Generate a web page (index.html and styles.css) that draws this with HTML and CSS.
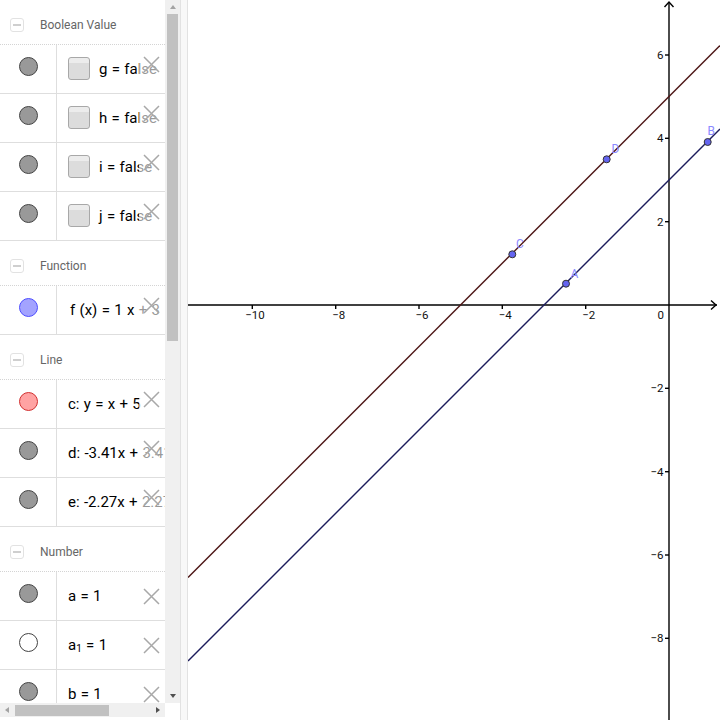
FILE: index.html
```html
<!DOCTYPE html>
<html>
<head>
<meta charset="utf-8">
<link rel="stylesheet" href="styles.css">
</head>
<body>
<div class="app">
  <div class="algebra">
    <div class="av-top">
      <div class="av-list">
        <div class="group"><span class="toggle"></span><span class="group-title">Boolean Value</span></div>
        <div class="item">
          <div class="marble-cell"><span class="marble gray"></span></div>
          <div class="content"><span class="checkbox"></span><span class="formula">g = false</span></div>
          <span class="delete up"><svg width="17" height="17" viewBox="0 0 17 17"><path d="M1 1L16 16M16 1L1 16"/></svg></span>
        </div>
        <div class="item">
          <div class="marble-cell"><span class="marble gray"></span></div>
          <div class="content"><span class="checkbox"></span><span class="formula">h = false</span></div>
          <span class="delete up"><svg width="17" height="17" viewBox="0 0 17 17"><path d="M1 1L16 16M16 1L1 16"/></svg></span>
        </div>
        <div class="item">
          <div class="marble-cell"><span class="marble gray"></span></div>
          <div class="content"><span class="checkbox"></span><span class="formula">i = false</span></div>
          <span class="delete up"><svg width="17" height="17" viewBox="0 0 17 17"><path d="M1 1L16 16M16 1L1 16"/></svg></span>
        </div>
        <div class="item">
          <div class="marble-cell"><span class="marble gray"></span></div>
          <div class="content"><span class="checkbox"></span><span class="formula">j = false</span></div>
          <span class="delete up"><svg width="17" height="17" viewBox="0 0 17 17"><path d="M1 1L16 16M16 1L1 16"/></svg></span>
        </div>
        <div class="group"><span class="toggle"></span><span class="group-title">Function</span></div>
        <div class="item">
          <div class="marble-cell"><span class="marble blue"></span></div>
          <div class="content fx"><span class="formula">f (x) = 1 x + 3</span></div>
          <span class="delete up"><svg width="17" height="17" viewBox="0 0 17 17"><path d="M1 1L16 16M16 1L1 16"/></svg></span>
        </div>
        <div class="group"><span class="toggle"></span><span class="group-title">Line</span></div>
        <div class="item">
          <div class="marble-cell"><span class="marble red"></span></div>
          <div class="content"><span class="formula">c: y = x + 5</span></div>
          <span class="delete up"><svg width="17" height="17" viewBox="0 0 17 17"><path d="M1 1L16 16M16 1L1 16"/></svg></span>
        </div>
        <div class="item">
          <div class="marble-cell"><span class="marble gray"></span></div>
          <div class="content"><span class="formula">d: -3.41x + 3.41y = 17.05</span></div>
          <span class="delete up"><svg width="17" height="17" viewBox="0 0 17 17"><path d="M1 1L16 16M16 1L1 16"/></svg></span>
        </div>
        <div class="item">
          <div class="marble-cell"><span class="marble gray"></span></div>
          <div class="content"><span class="formula">e: -2.27x + 2.27y = 6.82</span></div>
          <span class="delete up"><svg width="17" height="17" viewBox="0 0 17 17"><path d="M1 1L16 16M16 1L1 16"/></svg></span>
        </div>
        <div class="group"><span class="toggle"></span><span class="group-title">Number</span></div>
        <div class="item">
          <div class="marble-cell"><span class="marble gray"></span></div>
          <div class="content"><span class="formula">a = 1</span></div>
          <span class="delete"><svg width="17" height="17" viewBox="0 0 17 17"><path d="M1 1L16 16M16 1L1 16"/></svg></span>
        </div>
        <div class="item">
          <div class="marble-cell"><span class="marble white"></span></div>
          <div class="content"><span class="formula">a<sub>1</sub> = 1</span></div>
          <span class="delete"><svg width="17" height="17" viewBox="0 0 17 17"><path d="M1 1L16 16M16 1L1 16"/></svg></span>
        </div>
        <div class="item">
          <div class="marble-cell"><span class="marble gray"></span></div>
          <div class="content"><span class="formula">b = 1</span></div>
          <span class="delete"><svg width="17" height="17" viewBox="0 0 17 17"><path d="M1 1L16 16M16 1L1 16"/></svg></span>
        </div>
      </div>
      <div class="vscroll">
        <div class="sbtn"><span class="tri-up"></span></div>
        <div class="vthumb"></div>
        <div class="sspace"></div>
        <div class="sbtn"><span class="tri-down"></span></div>
      </div>
    </div>
    <div class="hscroll">
      <div class="hbtn"><span class="tri-left"></span></div>
      <div class="hthumb"></div>
      <div class="sspace"></div>
      <div class="hbtn"><span class="tri-right"></span></div>
    </div>
  </div>
  <div class="splitter"></div>
  <div class="graphics">
    <svg class="plot" width="532" height="720" viewBox="0 0 532 720">
      <g class="axes">
        <line x1="0" y1="305" x2="529" y2="305"/>
        <polyline points="523,300.5 528,305 523,309.5"/>
        <line x1="481" y1="2" x2="481" y2="720"/>
        <polyline points="476.5,7 481,2 485.5,7"/>
        <line x1="64.3" y1="305" x2="64.3" y2="309"/>
        <line x1="147.7" y1="305" x2="147.7" y2="309"/>
        <line x1="231" y1="305" x2="231" y2="309"/>
        <line x1="314.3" y1="305" x2="314.3" y2="309"/>
        <line x1="397.7" y1="305" x2="397.7" y2="309"/>
        <line x1="477" y1="55" x2="481" y2="55"/>
        <line x1="477" y1="138.3" x2="481" y2="138.3"/>
        <line x1="477" y1="221.7" x2="481" y2="221.7"/>
        <line x1="477" y1="388.3" x2="481" y2="388.3"/>
        <line x1="477" y1="471.7" x2="481" y2="471.7"/>
        <line x1="477" y1="555" x2="481" y2="555"/>
        <line x1="477" y1="638.3" x2="481" y2="638.3"/>
      </g>
      <g class="xlab">
        <text x="67" y="319">−10</text>
        <text x="150.7" y="319">−8</text>
        <text x="234" y="319">−6</text>
        <text x="317.3" y="319">−4</text>
        <text x="400.7" y="319">−2</text>
      </g>
      <g class="ylab">
        <text x="476" y="319">0</text>
        <text x="475.5" y="59">6</text>
        <text x="475.5" y="142.3">4</text>
        <text x="475.5" y="225.7">2</text>
        <text x="475.5" y="392.3">−2</text>
        <text x="475.5" y="475.7">−4</text>
        <text x="475.5" y="559">−6</text>
        <text x="475.5" y="642.3">−8</text>
      </g>
      <line class="line-c" x1="0" y1="577.6" x2="532" y2="45.6"/>
      <line class="line-f" x1="0" y1="661" x2="532" y2="129"/>
      <g class="pts">
        <circle cx="378" cy="283.7" r="3.5"/>
        <circle cx="519.7" cy="142" r="3.5"/>
        <circle cx="324.3" cy="254.3" r="3.5"/>
        <circle cx="418.7" cy="159.3" r="3.5"/>
      </g>
      <g class="plab">
        <text x="382.5" y="277.5">A</text>
        <text x="519.5" y="135">B</text>
        <text x="328" y="248">C</text>
        <text x="423.5" y="153">D</text>
      </g>
    </svg>
  </div>
</div>
</body>
</html>
```

FILE: styles.css
```css
html, body {
  margin: 0;
  padding: 0;
  background: #fff;
}
body {
  width: 720px;
  height: 720px;
  overflow: hidden;
  font-family: Roboto, "Liberation Sans", sans-serif;
}
.app {
  display: flex;
  width: 720px;
  height: 720px;
}
.algebra {
  flex: none;
  width: 180px;
  display: flex;
  flex-direction: column;
}
.av-top {
  display: flex;
  height: 703px;
}
.av-list {
  width: 165px;
  height: 703px;
  overflow: hidden;
}
.group {
  height: 45px;
  box-sizing: border-box;
  padding-top: 6px;
  padding-left: 10px;
  border-bottom: 1px dotted #d4d4d4;
  display: flex;
  align-items: center;
}
.toggle {
  width: 14px;
  height: 14px;
  border: 1px solid #e2e2e2;
  border-radius: 3px;
  box-sizing: border-box;
  display: flex;
  align-items: center;
  justify-content: center;
}
.toggle::before {
  content: "";
  width: 8px;
  height: 2px;
  background: #cfcfcf;
}
.group-title {
  margin-left: 16px;
  font-size: 12px;
  color: #666;
  white-space: nowrap;
}
.item {
  position: relative;
  height: 49px;
  box-sizing: border-box;
  border-bottom: 1px solid #dedede;
  display: flex;
}
.marble-cell {
  flex: none;
  width: 56px;
  border-right: 1px solid #dedede;
  display: flex;
  justify-content: center;
  align-items: flex-start;
  padding-top: 12px;
}
.marble {
  width: 17px;
  height: 17px;
  border-radius: 50%;
  border: 1px solid #444;
}
.marble.gray { background: #999; }
.marble.white { background: #fff; }
.marble.blue { background: #a3a3ff; border-color: #4d4dff; }
.marble.red { background: #ffa3a3; border-color: #d23030; }
.content {
  flex: 1;
  display: flex;
  align-items: center;
  padding-left: 11px;
  padding-bottom: 1px;
  white-space: nowrap;
  min-width: 0;
}
.content.fx { padding-left: 13px; }
.checkbox {
  flex: none;
  width: 22px;
  height: 23px;
  box-sizing: border-box;
  border: 1px solid #a8a8a8;
  border-radius: 3px;
  background: linear-gradient(#ececec 0, #ececec 5px, #dcdcdc 5px, #dcdcdc 100%);
  margin-right: 9px;
}
.formula {
  font-size: 15px;
  word-spacing: 0.6px;
  color: #000;
}
.formula sub {
  font-size: 10px;
  vertical-align: -2px;
}
.delete {
  position: absolute;
  top: 0;
  right: 0;
  bottom: 0;
  width: 26px;
  padding-left: 4px;
  box-sizing: border-box;
  background: rgba(255, 255, 255, 0.6);
  display: flex;
  align-items: center;
  justify-content: flex-start;
}
.delete.up { padding-bottom: 9px; }
.delete svg path {
  stroke: #a8a8a8;
  stroke-width: 1.5;
  fill: none;
}
.vscroll {
  width: 15px;
  background: #f0f0f0;
  display: flex;
  flex-direction: column;
  align-items: center;
}
.sbtn {
  height: 14px;
  width: 15px;
  display: flex;
  align-items: center;
  justify-content: center;
}
.vthumb {
  width: 11px;
  height: 327px;
  background: #c1c1c1;
}
.sspace { flex: 1; }
.tri-up {
  width: 0; height: 0;
  border-left: 3.5px solid transparent;
  border-right: 3.5px solid transparent;
  border-bottom: 4px solid #a3a3a3;
}
.tri-down {
  width: 0; height: 0;
  border-left: 3.5px solid transparent;
  border-right: 3.5px solid transparent;
  border-top: 4px solid #505050;
}
.hscroll {
  width: 165px;
  height: 14px;
  background: #f0f0f0;
  display: flex;
  align-items: center;
}
.hbtn {
  width: 14px;
  height: 14px;
  display: flex;
  align-items: center;
  justify-content: center;
}
.hthumb {
  width: 94px;
  height: 11px;
  margin-left: 1px;
  background: #c1c1c1;
}
.tri-left {
  width: 0; height: 0;
  border-top: 3.5px solid transparent;
  border-bottom: 3.5px solid transparent;
  border-right: 4px solid #a3a3a3;
}
.tri-right {
  width: 0; height: 0;
  border-top: 3.5px solid transparent;
  border-bottom: 3.5px solid transparent;
  border-left: 4px solid #505050;
}
.splitter {
  flex: none;
  width: 6px;
  background: #f8f8f8;
  border-left: 1px solid #e2e2e2;
  border-right: 1px solid #e2e2e2;
}
.graphics {
  flex: 1;
  overflow: hidden;
}
.plot { display: block; }
.axes line, .axes polyline {
  stroke: #000;
  stroke-width: 1.4;
  fill: none;
}
.xlab text, .ylab text {
  font-family: Roboto, "Liberation Sans", sans-serif;
  font-size: 11.5px;
  fill: #111;
}
.xlab text { text-anchor: middle; }
.ylab text { text-anchor: end; }
.line-c { stroke: #4c1414; stroke-width: 1.4; }
.line-f { stroke: #1c1c5c; stroke-width: 1.4; }
.pts circle {
  fill: #6464f0;
  stroke: #333;
  stroke-width: 1;
}
.plab text {
  font-family: Roboto, "Liberation Sans", sans-serif;
  font-size: 12px;
  fill: #8a8aff;
}
```
